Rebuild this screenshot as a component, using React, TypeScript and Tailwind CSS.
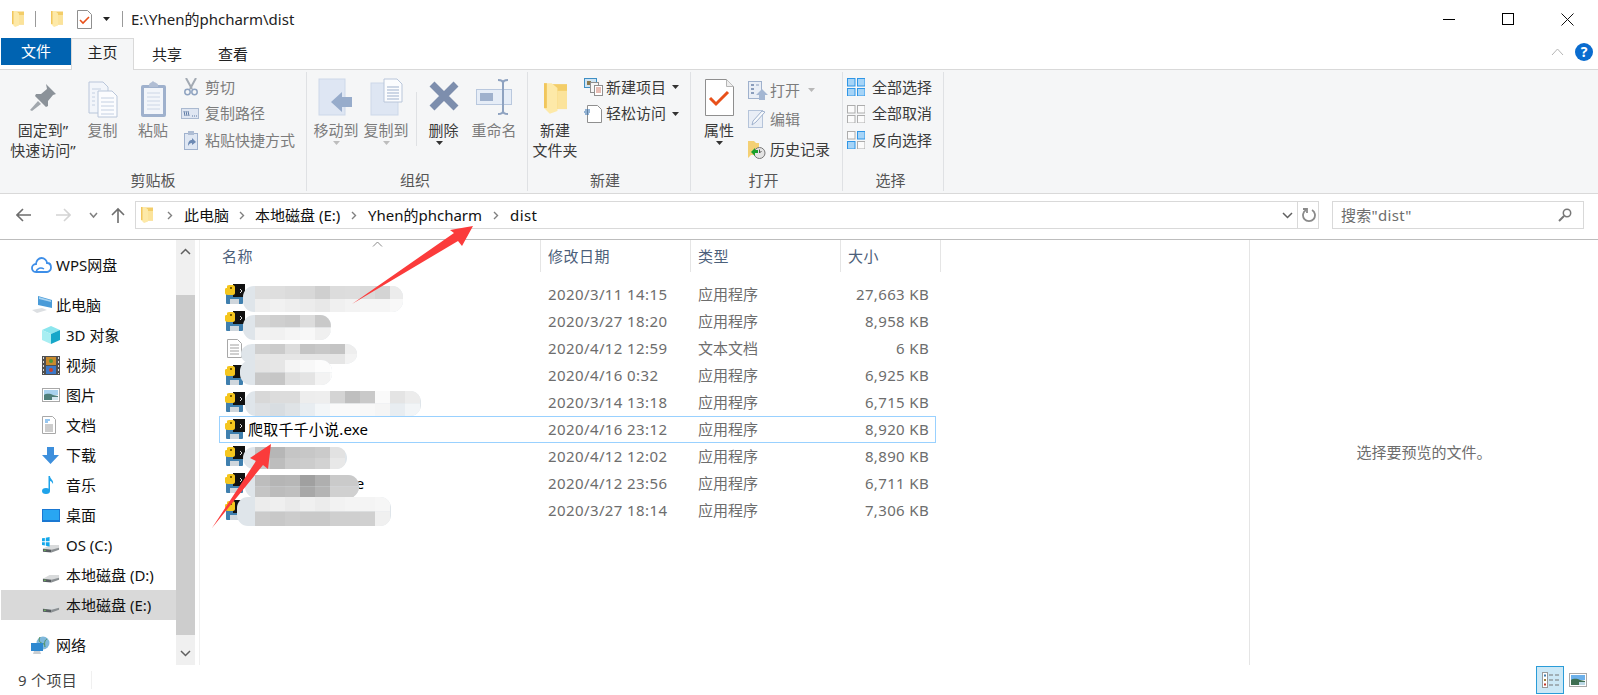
import type { ReactNode } from 'react';

// --- icons ---

function Folder({ w = 12, h = 16 }: { w?: number; h?: number }) {
  return (
    <svg width={w} height={h} viewBox="0 0 24 32" className="shrink-0">
      <rect x="5" y="1" width="19" height="26" fill="#f3cd68" />
      <path d="M14 8h10v19H14z" fill="#fbe39b" />
      <path d="M0 0h8l6 5v24l-8 3-6-6z" fill="#fde9a8" />
      <path d="M0 0h3v26H0z" fill="#f1c65c" />
    </svg>
  );
}

function PyExe() {
  return (
    <svg width="20" height="21" viewBox="0 0 20 21" className="shrink-0">
      <rect x="1" y="8" width="17" height="12" rx="1" fill="#3f7fae" />
      <rect x="5" y="15" width="9" height="5" fill="#cfd6dc" />
      <rect x="8" y="0" width="12" height="13" fill="#111" />
      <path d="M15 5l2 2-2 2" stroke="#ddd" fill="none" />
      <path d="M2 2c0-1 2-1 3-1h3c1 0 2 1 2 2v6c0 1-1 2-2 2H3c-2 0-3-1-3-2V5c0-1 1-1 2-1z" fill="#f5c61e" />
      <rect x="5" y="3" width="2" height="2" fill="#7a5d00" />
    </svg>
  );
}

function Pin() {
  return (
    <svg width="30" height="30" viewBox="0 0 30 30">
      <path d="M18 2l10 10-3 1-5 6 0 5-2 1-11-11 1-2 5 0 6-5z" fill="#8b9299" />
      <path d="M10 19L2 28l2 1 9-7z" fill="#a1a7ad" />
    </svg>
  );
}

function CopyDocs() {
  return (
    <svg width="30" height="37" viewBox="0 0 30 37">
      <path d="M1 1h14l5 5v26H1z" fill="#f2f5fa" stroke="#b9c6da" />
      <path d="M10 10h14l5 5v21H10z" fill="#fbfcfe" stroke="#b9c6da" />
      <path d="M4 8h9M4 12h3M4 16h3M4 20h3M4 24h3M13 17h13M13 21h13M13 25h13M13 29h13M13 33h13" stroke="#c4d0e2" />
    </svg>
  );
}

function Clipboard() {
  return (
    <svg width="27" height="38" viewBox="0 0 27 38">
      <rect x="1" y="5" width="25" height="32" rx="2" fill="#9fb1cd" />
      <rect x="4" y="8" width="19" height="26" fill="#f2f5fa" />
      <path d="M7 13h13M7 17h13M7 21h13M7 25h13M7 29h13" stroke="#ccd6e6" />
      <path d="M9 5c0-2 2-2 4-4 2 2 5 2 5 4v2H9z" fill="#b1bed4" />
    </svg>
  );
}

function Scissors() {
  return (
    <svg width="14" height="18" viewBox="0 0 14 18" fill="none">
      <path d="M2 0l6 11M12 0L6 11" stroke="#a3aab3" strokeWidth="2" />
      <circle cx="3.500" cy="14" r="2.700" stroke="#8fa3c0" strokeWidth="1.500" />
      <circle cx="10.500" cy="14" r="2.700" stroke="#8fa3c0" strokeWidth="1.500" />
    </svg>
  );
}

function PathIcon() {
  return (
    <svg width="18" height="11" viewBox="0 0 18 11">
      <rect x=".5" y=".5" width="17" height="10" fill="#dfe6f2" stroke="#aab9d0" />
      <path d="M3 3l1 5M5 3l1 5M7 3l1 5" stroke="#5f7ba5" />
      <path d="M11 8h1M13 8h1M15 8h1" stroke="#5f7ba5" />
    </svg>
  );
}

function Shortcut() {
  return (
    <svg width="14" height="19" viewBox="0 0 14 19">
      <rect x=".5" y="2.500" width="13" height="16" fill="#dfe7f3" stroke="#9fb1cd" />
      <rect x="4" y="0" width="6" height="4" fill="#aebdd4" />
      <path d="M4 15c0-5 2-6 4-6V7l4 4-4 3v-2c-2 0-3 1-4 3z" fill="#6c89b3" />
    </svg>
  );
}

function MoveTo() {
  return (
    <svg width="36" height="38" viewBox="0 0 36 38">
      <rect x="1" y="1" width="26" height="36" fill="#dee6f3" stroke="#cdd8e9" />
      <path d="M13 24l11-10v5h10v10H24v5z" fill="#97accb" />
    </svg>
  );
}

function CopyTo() {
  return (
    <svg width="33" height="38" viewBox="0 0 33 38">
      <rect x="1" y="5" width="27" height="32" fill="#dee6f3" stroke="#cdd8e9" />
      <path d="M14 1h13l5 5v18H14z" fill="#fbfcfe" stroke="#b9c6da" />
      <path d="M17 9h12M17 12h12M17 15h12M17 18h12M17 21h12" stroke="#9fb1cd" />
    </svg>
  );
}

function BigX() {
  return (
    <svg width="32" height="32" viewBox="0 0 32 32">
      <path d="M4 4l24 24M28 4L4 28" stroke="#7d8ead" strokeWidth="7" />
    </svg>
  );
}

function Rename() {
  return (
    <svg width="36" height="36" viewBox="0 0 36 36">
      <rect x=".5" y="10.500" width="35" height="15" fill="#e6edf7" stroke="#b9c8de" />
      <rect x="4" y="14" width="13" height="8" fill="#9fb1cd" />
      <path d="M27 2v32M22 1c3 0 5 1 5 3 0-2 2-3 5-3M22 35c3 0 5-1 5-3 0 2 2 3 5 3" fill="none" stroke="#8ea2c0" strokeWidth="2" />
    </svg>
  );
}

function NewItem() {
  return (
    <svg width="19" height="18" viewBox="0 0 19 18">
      <rect x=".5" y=".5" width="12" height="9" fill="#cfe4f3" stroke="#3f8fc4" />
      <rect x="3" y="3" width="4" height="4" fill="#8c7a4e" />
      <rect x="6.500" y="4.500" width="8" height="10" fill="#f6f6f6" stroke="#8f8f8f" />
      <rect x="10.500" y="7.500" width="8" height="10" fill="#fff" stroke="#8f8f8f" />
      <path d="M12 10h5M12 12h5M12 14h5" stroke="#d07a6a" />
    </svg>
  );
}

function EasyAccess() {
  return (
    <svg width="18" height="18" viewBox="0 0 18 18">
      <path d="M3.500.5h10l4 4v13h-14z" fill="#fff" stroke="#8f8f8f" />
      <path d="M1 5h5M0 7h6M1 9h4" stroke="#2f6fb0" />
    </svg>
  );
}

function Properties() {
  return (
    <svg width="29" height="37" viewBox="0 0 29 37">
      <path d="M.5.5h21l7 7v29H.5z" fill="#fff" stroke="#8f8f8f" />
      <path d="M21.500.5v7h7" fill="#eee" stroke="#b5b5b5" />
      <path d="M5 19l6 6 12-12" fill="none" stroke="#e8501a" strokeWidth="3" />
    </svg>
  );
}

function OpenIcon() {
  return (
    <svg width="20" height="19" viewBox="0 0 20 19">
      <rect x=".5" y=".5" width="13" height="17" fill="#e9eef6" stroke="#9fb1cd" />
      <path d="M3 4h3M3 8h3M3 12h3" stroke="#8a9dbc" strokeWidth="2" />
      <path d="M8 4h3" stroke="#8a9dbc" />
      <path d="M14 8l6 6h-3v5h-6v-5H8z" fill="#a4b7d3" />
    </svg>
  );
}

function EditIcon() {
  return (
    <svg width="17" height="19" viewBox="0 0 17 19">
      <rect x=".5" y=".5" width="14" height="17" fill="#e9eef6" stroke="#b5c4da" />
      <path d="M4 15l1-4 9-10 3 1-9 10z" fill="#f8fafc" stroke="#9fb1cd" />
    </svg>
  );
}

function HistoryIcon() {
  return (
    <svg width="18" height="19" viewBox="0 0 18 19">
      <path d="M0 1h6l2 2h3v12H3l-3 3z" fill="#f4d074" />
      <circle cx="11.500" cy="13" r="5.500" fill="#e4e4e4" stroke="#777" />
      <path d="M11.500 9.500V13l2-2" stroke="#555" fill="none" />
      <path d="M3 12l4-4v2h3v3H7v3z" fill="#18a02c" />
    </svg>
  );
}

function Grid4({ cells }: { cells: [boolean, boolean, boolean, boolean] }) {
  const pos = [[0, 0], [10, 0], [0, 10], [10, 10]];
  return (
    <svg width="18" height="18" viewBox="0 0 18 18" className="shrink-0">
      {pos.map(([x, y], i) => (
        <rect
          key={i}
          x={x + 0.5}
          y={y + 0.5}
          width="7.500"
          height="7.500"
          fill={cells[i] ? '#a6d4f7' : '#fbfbfb'}
          stroke={cells[i] ? '#2f96e6' : '#adadad'}
        />
      ))}
    </svg>
  );
}

function Caret({ color = '#333' }: { color?: string }) {
  return (
    <svg width="7" height="4" viewBox="0 0 7 4" className="shrink-0">
      <path d="M0 0h7L3.500 4z" fill={color} />
    </svg>
  );
}

function Crumb() {
  return (
    <svg width="6" height="9" viewBox="0 0 6 9" className="shrink-0">
      <path d="M1 1l3.500 3.500L1 8" stroke="#808080" strokeWidth="1.400" fill="none" />
    </svg>
  );
}

function Chev({ up = false }: { up?: boolean }) {
  return (
    <svg width="11" height="7" viewBox="0 0 11 7">
      <path d={up ? 'M1 6l4.500-4.500L10 6' : 'M1 1l4.500 4.500L10 1'} stroke="#606060" strokeWidth="1.500" fill="none" />
    </svg>
  );
}

function NavArrow({ color, dir }: { color: string; dir: 'left' | 'right' | 'up' }) {
  const d = { left: 'M15 8H1M7 2L1 8l6 6', right: 'M1 8h14M9 2l6 6-6 6', up: 'M8 16V2M2 8l6-6 6 6' }[dir];
  return (
    <svg width="16" height="16" viewBox="0 0 16 16" className="shrink-0">
      <path d={d} stroke={color} strokeWidth="1.600" fill="none" />
    </svg>
  );
}

// sidebar icons
function CloudIcon() {
  return (
    <svg width="21" height="16" viewBox="0 0 21 16">
      <path d="M5 15C2 15 1 13 1 11s1.500-4 4-4c0-3 2.500-6 5.500-6S16 3.500 16 6c2.500 0 4 2 4 4.500S18 15 16 15z" fill="none" stroke="#3d8ee8" strokeWidth="1.800" />
      <path d="M5 15c1-4 5-5 8-3" fill="none" stroke="#3d8ee8" strokeWidth="1.500" />
    </svg>
  );
}

function PcIcon() {
  return (
    <svg width="22" height="18" viewBox="0 0 22 18">
      <path d="M7 0l14 4v8L7 9z" fill="#4a9bd8" />
      <path d="M8 1l12 3.500V6L8 3z" fill="#a8d4f2" />
      <path d="M1 14l10-2 5 2-10 3z" fill="#dcdfe2" />
    </svg>
  );
}

function CubeIcon() {
  return (
    <svg width="18" height="18" viewBox="0 0 18 18">
      <path d="M9 0l9 4-9 4-9-4z" fill="#8ce6ee" />
      <path d="M0 4l9 4v10L0 14z" fill="#a8eef2" />
      <path d="M18 4L9 8v10l9-4z" fill="#16a7c9" />
    </svg>
  );
}

function FilmIcon() {
  return (
    <svg width="18" height="19" viewBox="0 0 18 19">
      <rect width="18" height="19" fill="#4f4f4f" />
      <path d="M1.500 1v17M16.500 1v17" stroke="#ddd" strokeDasharray="2 2" />
      <rect x="4" y="1" width="10" height="8" fill="#c98a2d" />
      <rect x="4" y="10" width="10" height="8" fill="#3b78c8" />
      <circle cx="9" cy="5" r="2" fill="#4a9a3c" />
      <circle cx="9" cy="14" r="2" fill="#c9412d" />
    </svg>
  );
}

function PictureIcon() {
  return (
    <svg width="18" height="14" viewBox="0 0 18 14">
      <rect x=".5" y=".5" width="17" height="13" fill="#fff" stroke="#a8a8a8" />
      <rect x="2" y="2" width="14" height="5" fill="#a9d2ee" />
      <path d="M2 7c3-2 7-1 9 0l5 1v4H2z" fill="#4f7f7a" />
      <path d="M10 9h6v3h-6z" fill="#d3e6ee" />
    </svg>
  );
}

function DocIcon() {
  return (
    <svg width="14" height="18" viewBox="0 0 14 18">
      <path d="M.5.5h10l3 3v14H.5z" fill="#fff" stroke="#a8a8a8" />
      <path d="M3 4h5M3 6h3" stroke="#2f8de0" strokeWidth="1.200" />
      <path d="M3 9h8M3 11h8M3 13h8M3 15h8" stroke="#9a9a9a" />
    </svg>
  );
}

function DownIcon() {
  return (
    <svg width="17" height="17" viewBox="0 0 17 17">
      <path d="M5 0h7v8h5l-8.500 9L0 8h5z" fill="#3d8fdc" />
    </svg>
  );
}

function MusicIcon() {
  return (
    <svg width="12" height="18" viewBox="0 0 12 18">
      <ellipse cx="4" cy="15" rx="4" ry="3" fill="#1fa3ea" />
      <path d="M6.500 0H8c0 3 4 4 3 8-1-2-2-3-3-3v10H6.500z" fill="#1fa3ea" />
    </svg>
  );
}

function DesktopIcon() {
  return (
    <svg width="18" height="13" viewBox="0 0 18 13">
      <rect width="18" height="13" fill="#1a78d2" />
      <rect x="1" y="1" width="16" height="10" fill="#29a6f2" />
    </svg>
  );
}

function DriveIcon({ win = false }: { win?: boolean }) {
  return (
    <svg width="19" height="18" viewBox="0 0 19 18">
      <path d="M1 13l7-4h10v3l-8 4-9-1z" fill="#d8dadb" />
      <path d="M1 13l9 1v3l-9-1z" fill="#565c60" />
      <path d="M10 14l8-2v2l-8 3z" fill="#8a8f92" />
      <rect x="2" y="14" width="2" height="1" fill="#74d45a" />
      {win && (
        <path d="M0 2l3-.5V5H0zM4 1.300L8 .5V5H4zM0 6h3v3.500L0 9zM4 6h4v4.500l-4-.7z" fill="#12a7ea" />
      )}
    </svg>
  );
}

function NetIcon() {
  return (
    <svg width="19" height="19" viewBox="0 0 19 19">
      <circle cx="12" cy="7" r="6.500" fill="#7fb8dc" />
      <path d="M9 1c-2 4 0 6 4 7M16 3c-2 1-3 3-2 8" stroke="#4d8f58" fill="none" />
      <rect x="0" y="7" width="12" height="8" fill="#2d88d0" />
      <path d="M3 15h6l1 3H2z" fill="#c9ced2" />
    </svg>
  );
}

// --- ribbon pieces ---

type LargeProps = {
  icon: ReactNode;
  label: ReactNode;
  width: string;
  dim?: boolean;
  caret?: ReactNode;
};

function LargeButton({ icon, label, width, dim, caret }: LargeProps) {
  return (
    <div className={`flex flex-col items-center ${width}`}>
      <div className="flex h-[42px] items-end justify-center">{icon}</div>
      <div className={`text-center text-[15px] leading-[20px] whitespace-nowrap ${dim ? 'text-[#7c7c7c]' : 'text-[#3a3a3a]'}`}>
        {label}
      </div>
      {caret && <div className="mt-[-1px] flex h-[8px] items-center">{caret}</div>}
    </div>
  );
}

function SmallRow({ icon, label, dim, h, iconW = 'w-[20px]', caret }: { icon: ReactNode; label: string; dim?: boolean; h: string; iconW?: string; caret?: ReactNode }) {
  return (
    <div className={`flex items-center ${h}`}>
      <div className={`flex shrink-0 ${iconW}`}>{icon}</div>
      <span className={`text-[15px] whitespace-nowrap ${dim ? 'text-[#7c7c7c]' : 'text-[#3a3a3a]'}`}>{label}</span>
      {caret}
    </div>
  );
}

function Group({ width, label, labelPad = '', children }: { width: string; label: string; labelPad?: string; children: ReactNode }) {
  return (
    <div className={`flex h-full shrink-0 flex-col ${width}`}>
      <div className="flex flex-1 min-h-0">{children}</div>
      <div className={`flex h-[26px] items-center ${labelPad}`}>
        <div className="flex-1 text-center text-[15px] text-[#555]">{label}</div>
      </div>
    </div>
  );
}

function GroupDivider() {
  return <div className="my-[2px] w-px shrink-0 bg-[#dfe1e4]" />;
}

// --- data ---

const navRows: { label: string; icon: ReactNode; sub: boolean; gap?: boolean; active?: boolean }[] = [
  { label: 'WPS网盘', icon: <CloudIcon />, sub: false },
  { label: '此电脑', icon: <PcIcon />, sub: false, gap: true },
  { label: '3D 对象', icon: <CubeIcon />, sub: true },
  { label: '视频', icon: <FilmIcon />, sub: true },
  { label: '图片', icon: <PictureIcon />, sub: true },
  { label: '文档', icon: <DocIcon />, sub: true },
  { label: '下载', icon: <DownIcon />, sub: true },
  { label: '音乐', icon: <MusicIcon />, sub: true },
  { label: '桌面', icon: <DesktopIcon />, sub: true },
  { label: 'OS (C:)', icon: <DriveIcon win />, sub: true },
  { label: '本地磁盘 (D:)', icon: <DriveIcon />, sub: true },
  { label: '本地磁盘 (E:)', icon: <DriveIcon />, sub: true, active: true },
  { label: '网络', icon: <NetIcon />, sub: false, gap: true },
];

const files = [
  { date: '2020/3/11 14:15', type: '应用程序', size: '27,663 KB' },
  { date: '2020/3/27 18:20', type: '应用程序', size: '8,958 KB' },
  { date: '2020/4/12 12:59', type: '文本文档', size: '6 KB', text: true },
  { date: '2020/4/16 0:32', type: '应用程序', size: '6,925 KB' },
  { date: '2020/3/14 13:18', type: '应用程序', size: '6,715 KB' },
  { date: '2020/4/16 23:12', type: '应用程序', size: '8,920 KB', name: '爬取千千小说.exe' },
  { date: '2020/4/12 12:02', type: '应用程序', size: '8,890 KB' },
  { date: '2020/4/12 23:56', type: '应用程序', size: '6,711 KB', tail: 'xe' },
  { date: '2020/3/27 18:14', type: '应用程序', size: '7,306 KB' },
];

// mosaic smudges over the censored file names, in page pixels
const smudges: { x: number; y: number; w: number; h: number; cx: number; top: string[]; bottom: string[] }[] = [
  { x: 243, y: 286, w: 160, h: 26, cx: 255, top: ['#dfdfdf', '#dedede', '#dbdbdb', '#d8d8d8', '#cfcfcf', '#dcdcdc', '#dddddd', '#dadada', '#d4d4d4', '#ececec'], bottom: ['#eeeeee', '#f1f1f1', '#eeeeee', '#ececec', '#e8e8e8', '#f0f0f0', '#f3f3f3', '#f5f5f5', '#f5f5f5', '#f8f8f8'] },
  { x: 243, y: 315, w: 88, h: 25, cx: 255, top: ['#d4d4d4', '#cfcfcf', '#cccccc', '#dcdcdc', '#c9c9c9', '#cfcfcf'], bottom: ['#f2f2f2', '#f1f1f1', '#f5f5f5', '#f8f8f8', '#f0f0f0', '#f6f6f6'] },
  { x: 241, y: 344, w: 116, h: 20, cx: 255, top: ['#cfcfcf', '#cbcbcb', '#dcdcdc', '#c4c4c4', '#c8c8c8', '#c4c4c4', '#eeeeee'], bottom: ['#e6e6e6', '#e6e6e6', '#e6e6e6', '#e6e6e6', '#e6e6e6', '#e6e6e6', '#f3f3f3'] },
  { x: 240, y: 360, w: 92, h: 25, cx: 255, top: ['#e4e4e4', '#e6e6e6', '#f4f4f4', '#f8f8f8', '#fcfcfc', '#ffffff'], bottom: ['#c8c8c8', '#c6c6c6', '#dfdfdf', '#e4e4e4', '#f3f3f3', '#fafafa'] },
  { x: 245, y: 391, w: 176, h: 25, cx: 255, top: ['#d8d8d8', '#dcdcdc', '#dcdcdc', '#ededed', '#eeeeee', '#d4d4d4', '#bfbfbf', '#c9c9c9', '#fafafa', '#e4e4e4', '#ececec'], bottom: ['#dde0e3', '#d8dde1', '#dfe3e6', '#e8edf1', '#f3f6f8', '#fafafa', '#fafafa', '#f8f8f8', '#f5f5f5', '#e8edf1', '#f2f5f7'] },
  { x: 243, y: 447, w: 104, h: 22, cx: 255, top: ['#c2c2c2', '#b6b6b6', '#c5c5c5', '#c7c7c7', '#cbcbcb', '#e2e2e2'], bottom: ['#c8c8c8', '#bdbdbd', '#cacaca', '#cccccc', '#d2d2d2', '#e8e8e8'] },
  { x: 245, y: 475, w: 114, h: 23, cx: 255, top: ['#bdbdbd', '#b5b5b5', '#b7b7b7', '#a0a0a0', '#afafaf', '#cacaca', '#cacaca'], bottom: ['#c4c4c4', '#bcbcbc', '#bfbfbf', '#a8a8a8', '#b4b4b4', '#d0d0d0', '#d0d0d0'] },
  { x: 237, y: 497, w: 154, h: 29, cx: 255, top: ['#ececec', '#efefef', '#eaeaea', '#f0f0f0', '#ececec', '#f2f2f2', '#f4f4f4', '#f4f4f4', '#f6f6f6'], bottom: ['#cbcbcb', '#c8c8c8', '#cccccc', '#c9c9c9', '#c9c9c9', '#cfcfcf', '#cfcfcf', '#d0d0d0', '#f0f0f0'] },
];

// --- main ---

export default function App() {
  return (
    <div className="relative flex h-[695px] w-[1598px] flex-col overflow-hidden bg-white text-[15px] text-black [font-family:'Noto_Sans','Noto_Sans_CJK_SC',sans-serif]">
      {/* title bar */}
      <div className="flex h-[38px] shrink-0 items-center pl-[12px]">
        <Folder />
        <div className="ml-[11px] h-[16px] w-px bg-[#9a9a9a]" />
        <div className="ml-[15px]"><Folder /></div>
        <svg width="15" height="19" viewBox="0 0 15 19" className="ml-[14px]">
          <path d="M.5.5h10l4 4v14H.5z" fill="#fff" stroke="#8f8f8f" />
          <path d="M3 10l3 3 6-6" fill="none" stroke="#e8501a" strokeWidth="1.600" />
        </svg>
        <div className="ml-[11px]"><Caret color="#222" /></div>
        <div className="ml-[12px] h-[16px] w-px bg-[#9a9a9a]" />
        <span className="ml-[8px] text-[#222]">E:\Yhen的phcharm\dist</span>
        <div className="ml-auto flex items-center">
          <div className="flex w-[58px] justify-center"><div className="h-px w-[12px] bg-black" /></div>
          <div className="flex w-[59px] justify-center"><div className="h-[12px] w-[12px] border border-black" /></div>
          <svg width="13" height="13" viewBox="0 0 13 13" className="ml-[24px] mr-[24px]">
            <path d="M.5.5l12 12M12.500.5l-12 12" stroke="#111" />
          </svg>
        </div>
      </div>

      {/* tabs */}
      <div className="flex h-[32px] shrink-0 border-b border-[#d9d9d9] pl-px">
        <div className="flex h-[27px] w-[70px] items-center justify-center bg-[#0063b1] text-white">文件</div>
        <div className="relative z-10 flex h-[32px] w-[63px] items-center justify-center border-x border-t border-[#d9d9d9] bg-[#f5f6f7] pb-[4px] text-[#222]">主页</div>
        <div className="flex w-[66px] items-start justify-center pt-[5px] text-[#222]">共享</div>
        <div className="flex w-[66px] items-start justify-center pt-[5px] text-[#222]">查看</div>
        <div className="ml-auto flex items-center pr-[5px] pb-[4px]">
          <svg width="13" height="8" viewBox="0 0 13 8" className="mr-[11px]">
            <path d="M1 7l5.500-6L12 7" stroke="#b5b5b5" fill="none" />
          </svg>
          <div className="flex h-[18px] w-[18px] items-center justify-center rounded-full bg-[#0a6ccf] text-[14px] font-bold text-white">?</div>
        </div>
      </div>

      {/* ribbon */}
      <div className="flex h-[124px] shrink-0 border-b border-[#d9d9d9] bg-[#f5f6f7]">
        <Group width="w-[306px]" label="剪贴板">
          <div className="flex pt-[8px] pl-[8px]">
            <LargeButton width="w-[70px]" icon={<div className="mb-[8px]"><Pin /></div>} label={<>固定到”<br />快速访问”</>} />
            <LargeButton width="w-[49px]" dim icon={<div className="mb-[2px]"><CopyDocs /></div>} label="复制" />
            <LargeButton width="w-[52px]" dim icon={<div className="mb-[2px]"><Clipboard /></div>} label="粘贴" />
          </div>
          <div className="ml-[2px] pt-[4px]">
            <SmallRow h="h-[26px]" iconW="w-[24px] pl-[3px]" dim icon={<Scissors />} label="剪切" />
            <SmallRow h="h-[27px]" iconW="w-[24px]" dim icon={<PathIcon />} label="复制路径" />
            <SmallRow h="h-[27px]" iconW="w-[24px] pl-[3px]" dim icon={<Shortcut />} label="粘贴快捷方式" />
          </div>
        </Group>
        <GroupDivider />
        <Group width="w-[220px]" labelPad="pr-[4px]" label="组织">
          <div className="flex items-start pt-[8px] pl-[4px]">
            <LargeButton width="w-[50px]" dim caret={<Caret color="#bdbdbd" />} icon={<div className="mb-[4px]"><MoveTo /></div>} label="移动到" />
            <LargeButton width="w-[50px]" dim caret={<Caret color="#bdbdbd" />} icon={<div className="mb-[4px]"><CopyTo /></div>} label="复制到" />
            <div className="ml-[5px] mt-[14px] h-[54px] w-px bg-[#dfe1e4]" />
            <LargeButton width="w-[44px]" caret={<Caret />} icon={<div className="mb-[8px] ml-[9px]"><BigX /></div>} label={<span className="ml-[9px]">删除</span>} />
            <LargeButton width="w-[66px]" dim icon={<div className="mb-[5px]"><Rename /></div>} label="重命名" />
          </div>
        </Group>
        <GroupDivider />
        <Group width="w-[162px]" labelPad="pr-[8px]" label="新建">
          <div className="flex pt-[8px] pl-[2px]">
            <LargeButton width="w-[50px]" icon={<div className="mb-[4px]"><Folder w={23} h={35} /></div>} label={<>新建<br />文件夹</>} />
          </div>
          <div className="pt-[4px] pl-[4px]">
            <SmallRow h="h-[26px]" iconW="w-[22px]" icon={<NewItem />} label="新建项目" caret={<div className="ml-[6px]"><Caret /></div>} />
            <SmallRow h="h-[27px]" iconW="w-[22px]" icon={<EasyAccess />} label="轻松访问" caret={<div className="ml-[6px]"><Caret /></div>} />
          </div>
        </Group>
        <GroupDivider />
        <Group width="w-[151px]" labelPad="pr-[6px]" label="打开">
          <div className="flex pt-[8px] pl-[8px]">
            <LargeButton width="w-[40px]" caret={<Caret />} icon={<div className="mb-[4px]"><Properties /></div>} label="属性" />
          </div>
          <div className="pt-[5px] pl-[9px]">
            <SmallRow h="h-[30px]" iconW="w-[22px]" dim icon={<OpenIcon />} label="打开" caret={<div className="ml-[8px]"><Caret color="#b8b8b8" /></div>} />
            <SmallRow h="h-[29px]" iconW="w-[22px]" dim icon={<EditIcon />} label="编辑" />
            <SmallRow h="h-[30px]" iconW="w-[22px]" icon={<HistoryIcon />} label="历史记录" />
          </div>
        </Group>
        <GroupDivider />
        <Group width="w-[100px]" labelPad="pr-[5px]" label="选择">
          <div className="pt-[4px] pl-[4px]">
            <SmallRow h="h-[26px]" iconW="w-[25px]" icon={<Grid4 cells={[true, true, true, true]} />} label="全部选择" />
            <SmallRow h="h-[27px]" iconW="w-[25px]" icon={<Grid4 cells={[false, false, false, false]} />} label="全部取消" />
            <SmallRow h="h-[26px]" iconW="w-[25px]" icon={<Grid4 cells={[false, true, true, false]} />} label="反向选择" />
          </div>
        </Group>
        <GroupDivider />
      </div>

      {/* address row */}
      <div className="flex h-[46px] shrink-0 items-center border-b border-[#bdbdbd] pb-[3px]">
        <div className="ml-[16px] w-[16px]"><NavArrow color="#6e6e6e" dir="left" /></div>
        <div className="ml-[23px] w-[16px]"><NavArrow color="#d4d4d4" dir="right" /></div>
        <div className="ml-[17px] flex w-[11px]">
          <svg width="11" height="7" viewBox="0 0 11 7"><path d="M2 1l3.500 4L9 1" stroke="#808080" strokeWidth="1.500" fill="none" /></svg>
        </div>
        <div className="ml-[11px] w-[16px]"><NavArrow color="#6e6e6e" dir="up" /></div>
        <div className="ml-[9px] flex h-[28px] w-[1184px] items-center border border-[#d9d9d9] pl-[5px] text-[#111]">
          <Folder />
          <div className="ml-[14px]"><Crumb /></div>
          <span className="ml-[11px] w-[44px] shrink-0 whitespace-nowrap">此电脑</span>
          <div className="ml-[11px]"><Crumb /></div>
          <span className="ml-[10px] w-[85px] shrink-0 whitespace-nowrap">本地磁盘 (E:)</span>
          <div className="ml-[11px]"><Crumb /></div>
          <span className="ml-[11px] w-[113px] shrink-0 whitespace-nowrap">Yhen的phcharm</span>
          <div className="ml-[12px]"><Crumb /></div>
          <span className="ml-[11px] tracking-[0.4px]">dist</span>
          <div className="ml-auto mr-[4px]"><Chev /></div>
          <div className="flex h-full w-[21px] items-center justify-center border-l border-[#d9d9d9]">
            <svg width="15" height="15" viewBox="0 0 15 15" fill="none">
              <path d="M5 2a6 6 0 1 0 6 0" stroke="#8a8a8a" strokeWidth="1.800" />
              <path d="M2 1h4v4" stroke="#8a8a8a" strokeWidth="1.800" />
            </svg>
          </div>
        </div>
        <div className="ml-[13px] flex h-[28px] w-[252px] items-center justify-between border border-[#d9d9d9] pl-[8px] pr-[11px] text-[#6d6d6d]">
          <span className="tracking-[0.3px]">搜索"dist"</span>
          <svg width="14" height="14" viewBox="0 0 14 14" fill="none">
            <circle cx="9" cy="5" r="3.700" stroke="#777" strokeWidth="1.500" />
            <path d="M6 8l-5 5" stroke="#777" strokeWidth="2" />
          </svg>
        </div>
      </div>

      {/* body */}
      <div className="flex min-h-0 flex-1">
        {/* nav tree */}
        <div className="w-[176px] shrink-0 pt-[10px]">
          {navRows.map((row) => (
            <div
              key={row.label}
              className={`flex h-[30px] items-center ${row.gap ? 'mt-[10px]' : ''} ${row.active ? 'ml-px bg-[#d9d9d9]' : ''}`}
            >
              {row.sub ? (
                <div className={`flex w-[24px] shrink-0 justify-start pr-[6px] ${row.active ? 'ml-[41px]' : 'ml-[42px]'}`}>{row.icon}</div>
              ) : (
                <div className="ml-[31px] flex w-[25px] shrink-0">{row.icon}</div>
              )}
              <span className="whitespace-nowrap pt-[1px] text-[15px] text-[#111]">{row.label}</span>
            </div>
          ))}
        </div>

        {/* nav scrollbar */}
        <div className="flex w-[19px] shrink-0 flex-col bg-[#f0f0f0]">
          <div className="flex h-[55px] justify-center pt-[8px]"><Chev up /></div>
          <div className="h-[340px] bg-[#cdcdcd]" />
          <div className="flex flex-1 justify-center pt-[15px]"><Chev /></div>
        </div>
        <div className="ml-[4px] w-px shrink-0 bg-[#f0f0f0]" />

        {/* file list */}
        <div className="relative flex w-[1049px] shrink-0 flex-col">
          <div className="flex h-[32px] shrink-0 text-[#4c607a]">
            <div className="flex w-[341px] items-center border-r border-[#e5e5e5] pl-[22px] tracking-[0.5px]">名称</div>
            <div className="flex w-[150px] items-center border-r border-[#e5e5e5] pl-[7px] tracking-[0.5px]">修改日期</div>
            <div className="flex w-[150px] items-center border-r border-[#e5e5e5] pl-[7px] tracking-[0.5px]">类型</div>
            <div className="flex w-[100px] items-center border-r border-[#e5e5e5] pl-[7px] tracking-[0.5px]">大小</div>
          </div>
          <svg width="11" height="6" viewBox="0 0 11 6" className="absolute left-[172px] top-[1px]">
            <path d="M1 5.500L5.500 1 10 5.500" stroke="#8a8a8a" fill="none" />
          </svg>
          <div className="mt-[9px]">
            {files.map((f) => (
              <div
                key={f.date}
                className={`ml-[19px] flex h-[27px] w-[717px] items-center border ${f.name ? 'border-[#99d1ff]' : 'border-transparent'}`}
              >
                <div className="flex w-[328px] shrink-0 items-center pl-[5px]">
                  {f.text ? (
                    <svg width="15" height="19" viewBox="0 0 15 19" className="ml-[2px] mr-[8px]">
                      <path d="M.5.5h10l4 4v14H.5z" fill="#fff" stroke="#a8a8a8" />
                      <path d="M3 6h9M3 9h9M3 12h9M3 15h9" stroke="#a0a0a0" />
                    </svg>
                  ) : (
                    <div className="mr-[3px]"><PyExe /></div>
                  )}
                  {f.name && <span className="tracking-[0.2px] text-black">{f.name}</span>}
                  {f.tail && <span className="ml-[100px] text-black">{f.tail}</span>}
                </div>
                <div className="w-[150px] shrink-0 whitespace-nowrap tracking-[0.4px] text-[#6d6d6d]">{f.date}</div>
                <div className="w-[100px] shrink-0 whitespace-nowrap text-[#6d6d6d]">{f.type}</div>
                <div className="flex-1 whitespace-nowrap pr-[6px] text-right tracking-[0.35px] text-[#6d6d6d]">{f.size}</div>
              </div>
            ))}
          </div>
        </div>

        {/* preview */}
        <div className="flex flex-1 items-center justify-center border-l border-[#e5e5e5] text-[#6d6d6d]">
          选择要预览的文件。
        </div>
      </div>

      {/* status bar */}
      <div className="flex h-[30px] shrink-0 items-center pl-[18px]">
        <span className="tracking-[0.3px] text-[#444]">9 个项目</span>
        <div className="ml-[14px] h-[18px] w-px bg-[#f0f0f0]" />
        <div className="ml-auto mr-[11px] flex items-center">
          <div className="flex h-[28px] w-[28px] flex-col justify-center gap-[1px] border border-[#2b9cd8] bg-[#cce8f6] pl-[5px]">
            <svg width="18" height="16" viewBox="0 0 18 16">
              <rect x=".5" y=".5" width="5" height="15" fill="#fff" stroke="#999" />
              <rect x="2" y="2.500" width="2" height="2" fill="#3f7fae" />
              <rect x="2" y="7" width="2" height="2" fill="#9a7f3c" />
              <rect x="2" y="11.500" width="2" height="2" fill="#c0392b" />
              <path d="M7 3h4M13 3h4M7 8h4M13 8h4M7 13h4M13 13h4" stroke="#777" />
            </svg>
          </div>
          <div className="ml-[5px]">
            <svg width="18" height="14" viewBox="0 0 18 14">
              <rect x=".5" y=".5" width="17" height="13" fill="#fff" stroke="#a8a8a8" />
              <rect x="2" y="2" width="14" height="5" fill="#6cb0ea" />
              <path d="M2 7c3-2 7-1 9 0l5 1v4H2z" fill="#3f6f52" />
              <path d="M10 9h6v3h-6z" fill="#bcd8e6" />
            </svg>
          </div>
        </div>
      </div>

      {/* scribbles painted on the screenshot: mosaic smudges and the red arrows */}
      <svg width="1598" height="695" viewBox="0 0 1598 695" className="pointer-events-none absolute left-0 top-0">
        <defs>
          {smudges.map((s, i) => (
            <clipPath id={`smudge-${i}`} key={i}>
              <rect x={s.x} y={s.y} width={s.w} height={s.h} rx="11" />
            </clipPath>
          ))}
        </defs>
        {smudges.map((s, i) => (
          <g key={i} clipPath={`url(#smudge-${i})`}>
            <rect x={s.x} y={s.y} width={s.w} height={s.h} fill="#dfe5ea" />
            {s.top.map((c, j) => (
              <rect key={`t${j}`} x={s.cx + j * 15} y={s.y} width="15" height={s.h / 2} fill={c} />
            ))}
            {s.bottom.map((c, j) => (
              <rect key={`b${j}`} x={s.cx + j * 15} y={s.y + s.h / 2} width="15" height={s.h / 2} fill={c} />
            ))}
          </g>
        ))}
        <path d="M352 304L454 233 450 230 473 226 462 246 458 241z" fill="#fb3b3b" />
        <path d="M212 528L256 461 250 458 271 444 268 469 263 465z" fill="#fb3b3b" />
      </svg>
    </div>
  );
}
